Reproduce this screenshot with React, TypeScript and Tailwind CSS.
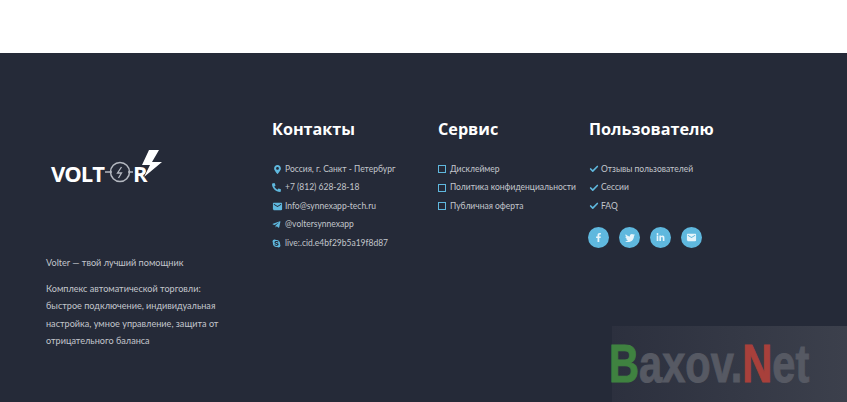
import { Check } from 'lucide-react'
import { FaFacebookF, FaLinkedinIn, FaMapMarkerAlt, FaPhone, FaSkype, FaTelegramPlane, FaTwitter } from 'react-icons/fa'
import { MdEmail } from 'react-icons/md'

const contacts = [
  { icon: <FaMapMarkerAlt size={9} color="#5fb8de" className="ml-[1px]" />, text: 'Россия, г. Санкт - Петербург' },
  { icon: <FaPhone size={9} color="#5fb8de" className="-scale-x-100" />, text: '+7 (812) 628-28-18' },
  { icon: <MdEmail size={11} color="#5fb8de" />, text: 'Info@synnexapp-tech.ru' },
  { icon: <FaTelegramPlane size={9} color="#5fb8de" />, text: '@voltersynnexapp' },
  { icon: <FaSkype size={9} color="#5fb8de" />, text: 'live:.cid.e4bf29b5a19f8d87' },
]

const service = ['Дисклеймер', 'Политика конфиденциальности', 'Публичная оферта']
const user = ['Отзывы пользователей', 'Сессии', 'FAQ']

function Logo() {
  return (
    <div className="flex items-end h-[35px] font-['Open_Sans',sans-serif] font-bold text-[22px] leading-[24px] text-white tracking-[-1px]">
      <span>VOLT</span>
      <svg width="29" height="22" viewBox="0 0 29 22" fill="none" className="mb-[2px] shrink-0">
        <circle cx="16" cy="11" r="9.5" stroke="#b4b8c0" strokeWidth="1.5" />
        <path d="M1 11h7M24 11h5" stroke="#b4b8c0" strokeWidth="1.6" />
        <path d="M17.5 6 13.5 12h4l-3 5" stroke="#b4b8c0" strokeWidth="1.3" />
      </svg>
      <span>R</span>
      <svg width="22" height="29" viewBox="0 0 22 29" className="-ml-[6px] mb-[7px] shrink-0">
        <path d="M8 1H18L11 13H21L3 28L9 16H1Z" fill="#fff" stroke="#252a38" strokeWidth="1" paintOrder="stroke" />
      </svg>
    </div>
  )
}

function Heading({ children }: { children: string }) {
  return <h3 className="font-['Open_Sans',sans-serif] font-bold text-[16.2px] leading-[20px] text-white whitespace-nowrap">{children}</h3>
}

function Social({ children }: { children: React.ReactNode }) {
  return <div className="w-[21px] h-[21px] rounded-full bg-[#5fb8de] flex items-center justify-center text-[#e6f4fa]">{children}</div>
}

export default function App() {
  return (
    <div className="relative w-[847px] h-[402px] overflow-hidden bg-white font-['Lato',sans-serif]">
      <div className="h-[53px]" />
      <footer className="h-[349px] bg-[#252a38] flex pl-[46px] pt-[66px] text-[#c3c6cc] text-[8.5px]">
        <div className="w-[226px] shrink-0 text-[9.1px]">
          <div className="pl-[5px] pt-[31px]">
            <Logo />
          </div>
          <p className="mt-[69px] leading-[17px]">Volter — твой лучший помощник</p>
          <p className="mt-[9px] w-[185px] leading-[17.4px]">
            Комплекс автоматической торговли: быстрое подключение, индивидуальная настройка, умное управление, защита от отрицательного баланса
          </p>
        </div>

        <div className="w-[166px] shrink-0">
          <Heading>Контакты</Heading>
          <ul className="mt-[23px] flex flex-col gap-[4.6px]">
            {contacts.map(c => (
              <li key={c.text} className="flex items-center h-[14px] whitespace-nowrap">
                <span className="w-[13px] flex justify-start shrink-0">{c.icon}</span>
                {c.text}
              </li>
            ))}
          </ul>
        </div>

        <div className="w-[151px] shrink-0">
          <Heading>Сервис</Heading>
          <ul className="mt-[23px] flex flex-col gap-[4.6px]">
            {service.map(s => (
              <li key={s} className="flex items-center h-[14px] whitespace-nowrap">
                <span className="w-[12px] shrink-0">
                  <span className="block w-[8px] h-[8px] border-[1.5px] border-[#5fb8de]" />
                </span>
                {s}
              </li>
            ))}
          </ul>
        </div>

        <div>
          <Heading>Пользователю</Heading>
          <ul className="mt-[23px] flex flex-col gap-[4.6px]">
            {user.map(u => (
              <li key={u} className="flex items-center h-[14px] whitespace-nowrap">
                <span className="w-[12px] shrink-0"><Check size={10} stroke="#5fb8de" strokeWidth={4} /></span>
                {u}
              </li>
            ))}
          </ul>
          <div className="mt-[14px] -ml-[1px] flex gap-[10px]">
            <Social><FaFacebookF size={9} /></Social>
            <Social><FaTwitter size={10} /></Social>
            <Social><FaLinkedinIn size={9} /></Social>
            <Social><MdEmail size={11} /></Social>
          </div>
        </div>
      </footer>

      {/* watermark over the corner */}
      <div className="absolute left-[612px] top-[326px] w-[235px] h-[76px] bg-gradient-to-r from-[#2c303e] to-[#3c404c]" />
      <div className="absolute left-[609px] top-[335px] font-['Liberation_Sans',sans-serif] font-bold text-[54px] leading-[56px] whitespace-nowrap origin-left scale-x-[0.77] text-[#565963] [-webkit-text-stroke:1px_currentColor]">
        <span className="text-[#3f8240]">B</span>axov.<span className="text-[#a8403b]">N</span>et
      </div>
    </div>
  )
}
